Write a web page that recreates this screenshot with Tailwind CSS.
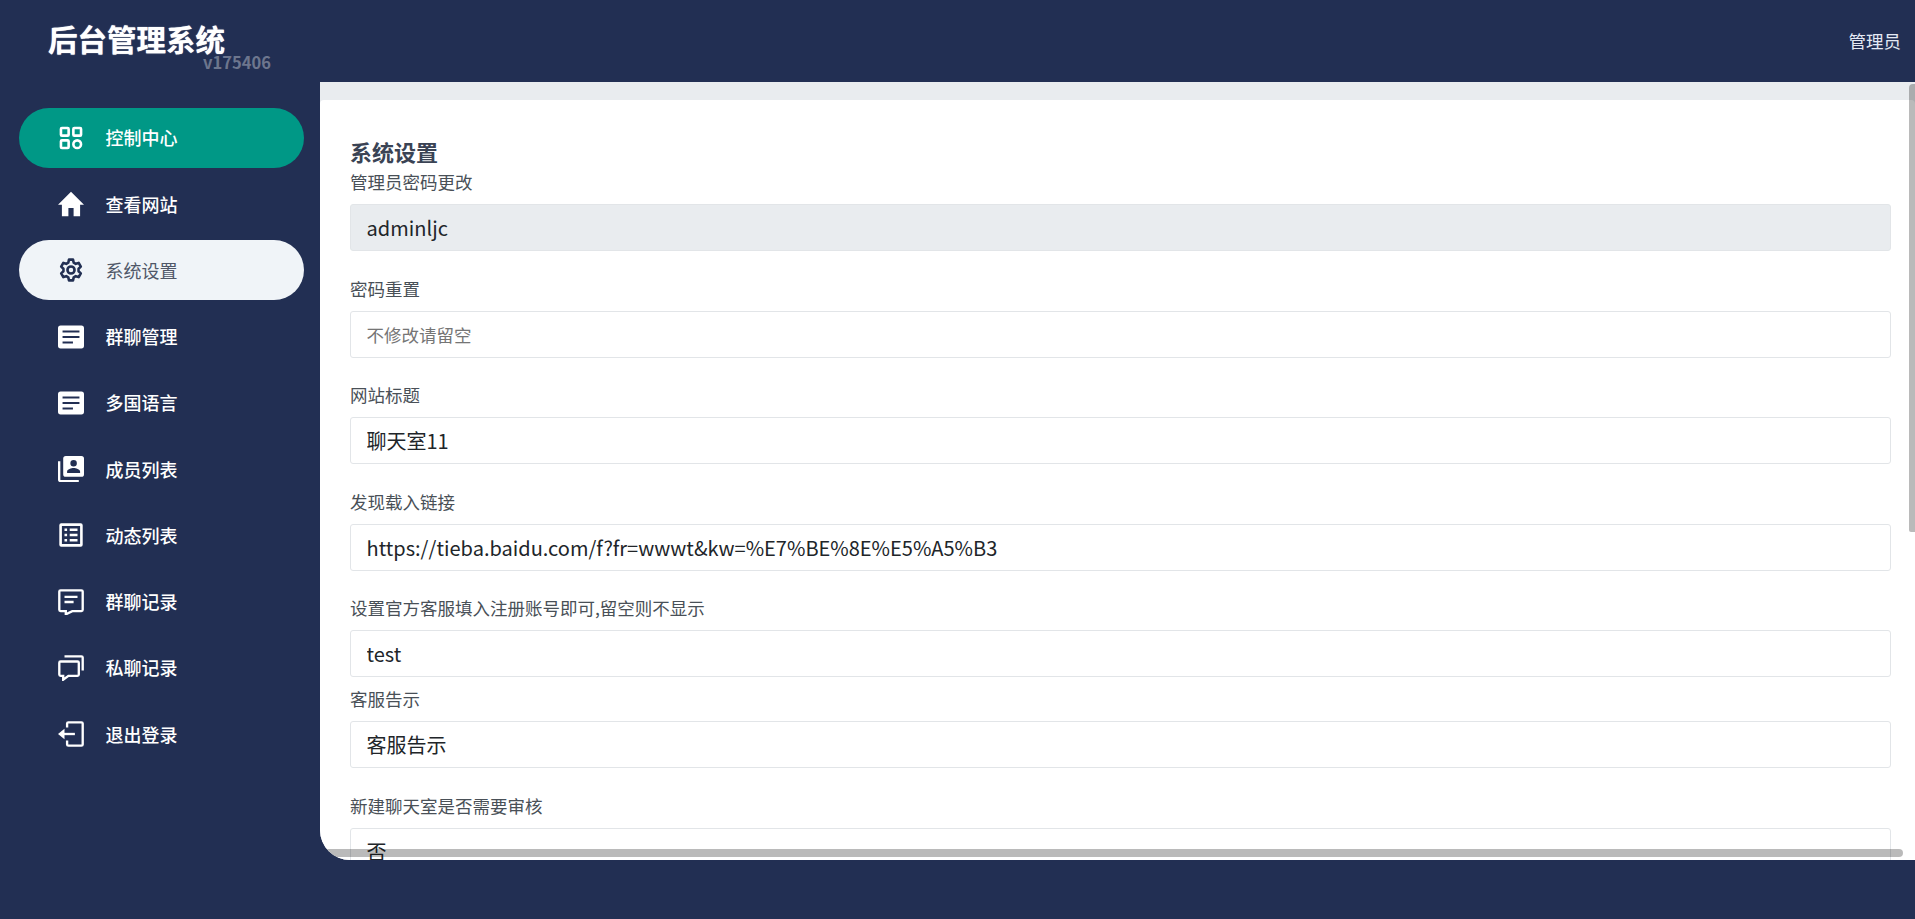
<!DOCTYPE html>
<html lang="zh-CN">
<head>
  <meta charset="UTF-8">
  <title>后台管理系统</title>
  <script src="https://cdn.jsdelivr.net/npm/@tailwindcss/browser@4"></script>
</head>
<body class="h-[919px] overflow-hidden bg-[#222f53] font-['Noto_Sans_CJK_SC',sans-serif]">
  <header class="h-[82px] flex justify-between">
    <div class="relative w-[320px]">
      <div class="pl-[48px] pt-[23px] text-[29.5px] leading-[31px] font-bold text-white [text-shadow:0_0_1px_#fff]">后台管理系统</div>
      <div class="absolute left-[203px] top-[54px] text-[16.5px] leading-[16px] font-bold text-white/35">v175406</div>
    </div>
    <div class="pr-[14px] pt-[28px] text-[17.5px] leading-[26px] text-[#e4e9f4]">管理员</div>
  </header>

  <div class="flex">
    <!-- 侧边菜单 -->
    <nav class="w-[320px] pt-[25.75px] pl-[19px] pr-[16px] flex flex-col gap-[6.25px]">
      <a class="h-[60px] rounded-full bg-[#009886] flex items-center pl-[39px] gap-[21.5px] text-white text-[18px] font-medium">
        <svg class="w-[26px] h-[26px]" viewBox="1 1 22 22" fill="none" stroke="currentColor" stroke-width="2.200"><rect x="3.500" y="3.500" width="6.500" height="6.500" rx=".8"/><rect x="14" y="3.500" width="6.500" height="6.500" rx=".8"/><rect x="3.500" y="14" width="6.500" height="6.500" rx=".8"/><circle cx="17.250" cy="17.250" r="3.250"/></svg>
        <span>控制中心</span>
      </a>
      <a class="h-[60px] flex items-center pl-[39px] gap-[21.5px] text-white text-[18px] font-medium">
        <svg class="w-[26px] h-[26px]" viewBox="2 2 20 20" fill="currentColor"><path d="M10 21.500v-6.500h4v6.500h5v-9h3L12 2.500 2 12.500h3v9z"/></svg>
        <span>查看网站</span>
      </a>
      <a class="h-[60px] rounded-full bg-[#f0f4f8] flex items-center pl-[39px] gap-[21.5px] text-[#4f5768] text-[18px]">
        <svg class="w-[26px] h-[26px] text-[#222f53]" viewBox="1 1 22 22" fill="none" stroke="currentColor" stroke-width="2.200" stroke-linejoin="round"><path d="M10.300 3.200h3.400l.6 2.600 1.700 1 2.500-.8 1.800 3.100-1.900 1.800v2.200l1.900 1.800-1.800 3.100-2.500-.8-1.700 1-.6 2.600h-3.400l-.6-2.600-1.700-1-2.500.8-1.800-3.100 1.900-1.800v-2.200L3.700 9.100 5.500 6l2.500.8 1.700-1z"/><circle cx="12" cy="12" r="3"/></svg>
        <span>系统设置</span>
      </a>
      <a class="h-[60px] flex items-center pl-[39px] gap-[21.5px] text-white text-[18px] font-medium">
        <svg class="w-[26px] h-[26px]" viewBox="2 2 20 20" fill="currentColor"><path fill-rule="evenodd" d="M4 3.200h16a2 2 0 0 1 2 2v13.600a2 2 0 0 1-2 2H4a2 2 0 0 1-2-2V5.200a2 2 0 0 1 2-2zM5.500 7v1.600h13V7zm0 4.200v1.600h13v-1.600zm0 4.200V17h8v-1.600z"/></svg>
        <span>群聊管理</span>
      </a>
      <a class="h-[60px] flex items-center pl-[39px] gap-[21.5px] text-white text-[18px] font-medium">
        <svg class="w-[26px] h-[26px]" viewBox="2 2 20 20" fill="currentColor"><path fill-rule="evenodd" d="M4 3.200h16a2 2 0 0 1 2 2v13.600a2 2 0 0 1-2 2H4a2 2 0 0 1-2-2V5.200a2 2 0 0 1 2-2zM5.500 7v1.600h13V7zm0 4.200v1.600h13v-1.600zm0 4.200V17h8v-1.600z"/></svg>
        <span>多国语言</span>
      </a>
      <a class="h-[60px] flex items-center pl-[39px] gap-[21.5px] text-white text-[18px] font-medium">
        <svg class="w-[26px] h-[26px]" viewBox="2 2 20 20" fill="currentColor"><path d="M2 6h1.800v14a.400.400 0 0 0 .400.400H18V22H4a2 2 0 0 1-2-2z"/><path fill-rule="evenodd" d="M8 2h12a2 2 0 0 1 2 2v12a2 2 0 0 1-2 2H8a2 2 0 0 1-2-2V4a2 2 0 0 1 2-2zm6 3a2.500 2.500 0 1 0 0 5 2.500 2.500 0 0 0 0-5zm-5 10h10v-1c0-1.800-3.300-2.800-5-2.800s-5 1-5 2.800z"/></svg>
        <span>成员列表</span>
      </a>
      <a class="h-[60px] flex items-center pl-[39px] gap-[21.5px] text-white text-[18px] font-medium">
        <svg class="w-[26px] h-[26px]" viewBox="2 2 20 20" fill="currentColor"><path fill-rule="evenodd" d="M4.500 3h15A1.500 1.500 0 0 1 21 4.500v15a1.500 1.500 0 0 1-1.500 1.500h-15A1.500 1.500 0 0 1 3 19.500v-15A1.500 1.500 0 0 1 4.500 3zM5 5v14h14V5z"/><path d="M7 7h2v2H7zm4 0h6v2h-6zm-4 4h2v2H7zm4 0h6v2h-6zm-4 4h2v2H7zm4 0h6v2h-6z"/></svg>
        <span>动态列表</span>
      </a>
      <a class="h-[60px] flex items-center pl-[39px] gap-[21.5px] text-white text-[18px] font-medium">
        <svg class="w-[26px] h-[26px]" viewBox="2 2 20 20" fill="none" stroke="currentColor" stroke-width="1.800"><path d="M4 3h16a1 1 0 0 1 1 1v14a1 1 0 0 1-1 1h-7l-5 2.500V19H4a1 1 0 0 1-1-1V4a1 1 0 0 1 1-1z"/><path d="M7 8h10M7 12h7"/></svg>
        <span>群聊记录</span>
      </a>
      <a class="h-[60px] flex items-center pl-[39px] gap-[21.5px] text-white text-[18px] font-medium">
        <svg class="w-[26px] h-[26px]" viewBox="2 2 20 20" fill="none" stroke="currentColor" stroke-width="1.800"><path d="M4 7h13a1 1 0 0 1 1 1v9a1 1 0 0 1-1 1h-7l-4 3v-3H4a1 1 0 0 1-1-1V8a1 1 0 0 1 1-1z"/><path d="M7 3h13a1 1 0 0 1 1 1v10"/></svg>
        <span>私聊记录</span>
      </a>
      <a class="h-[60px] flex items-center pl-[39px] gap-[21.5px] text-white text-[18px] font-medium">
        <svg class="w-[26px] h-[26px]" viewBox="2 2 20 20" fill="none" stroke="currentColor" stroke-width="1.800"><path d="M9 7V4a1 1 0 0 1 1-1h10a1 1 0 0 1 1 1v16a1 1 0 0 1-1 1H10a1 1 0 0 1-1-1v-3"/><path d="M15 12H6"/><path d="M7 8l-5 4 5 4z" fill="currentColor" stroke="none"/></svg>
        <span>退出登录</span>
      </a>
    </nav>

    <!-- 内容区 -->
    <main class="relative w-[1595px] h-[778px] rounded-bl-[30px] overflow-hidden bg-[#e9ecef] pt-[18px]">
      <div class="h-full rounded-t-[4px] bg-white pl-[30px] pr-[24px] pt-[35px] text-[17.5px] text-[#495057]">
        <h2 class="text-[22px] leading-[32px] mb-[2px] font-bold text-[#3a4354]">系统设置</h2>
        <label class="block leading-[26.25px] mb-[8.75px]">管理员密码更改</label>
        <input class="w-full h-[47px] px-[15.5px] rounded-[3px] border border-[#e2e5e8] bg-[#e9ecef] text-[#212529] text-[20px] outline-none" value="adminljc" readonly>
        <label class="block mt-[24.5px] leading-[26.25px] mb-[8.75px]">密码重置</label>
        <input class="w-full h-[47px] px-[15.5px] rounded-[3px] border border-[#e2e5e8] text-[#212529] text-[17.5px] placeholder:text-[#757575] outline-none" placeholder="不修改请留空">
        <label class="block mt-[24.5px] leading-[26.25px] mb-[8.75px]">网站标题</label>
        <input class="w-full h-[47px] px-[15.5px] rounded-[3px] border border-[#e2e5e8] text-[#212529] text-[20px] outline-none" value="聊天室11">
        <label class="block mt-[24.5px] leading-[26.25px] mb-[8.75px]">发现载入链接</label>
        <input class="w-full h-[47px] px-[15.5px] rounded-[3px] border border-[#e2e5e8] text-[#212529] text-[20px] outline-none" value="https://tieba.baidu.com/f?fr=wwwt&kw=%E7%BE%8E%E5%A5%B3">
        <label class="block mt-[24.5px] leading-[26.25px] mb-[8.75px]">设置官方客服填入注册账号即可,留空则不显示</label>
        <input class="w-full h-[47px] px-[15.5px] rounded-[3px] border border-[#e2e5e8] text-[#212529] text-[20px] outline-none" value="test">
        <label class="block mt-[9px] leading-[26.25px] mb-[8.75px]">客服告示</label>
        <input class="w-full h-[47px] px-[15.5px] rounded-[3px] border border-[#e2e5e8] text-[#212529] text-[20px] outline-none" value="客服告示">
        <label class="block mt-[24.5px] leading-[26.25px] mb-[8.75px]">新建聊天室是否需要审核</label>
        <input class="w-full h-[47px] px-[15.5px] rounded-[3px] border border-[#e2e5e8] text-[#212529] text-[20px] outline-none" value="否">
      </div>
      <!-- 滚动条 -->
      <div class="absolute right-0 top-[2px] w-[6px] h-[448px] rounded-tl-[4px] rounded-bl-[2px] bg-black/[0.27]"></div>
      <div class="absolute left-0 right-[12px] top-[767px] h-[8px] rounded-r-full bg-black/[0.27]"></div>
    </main>
  </div>
</body>
</html>
